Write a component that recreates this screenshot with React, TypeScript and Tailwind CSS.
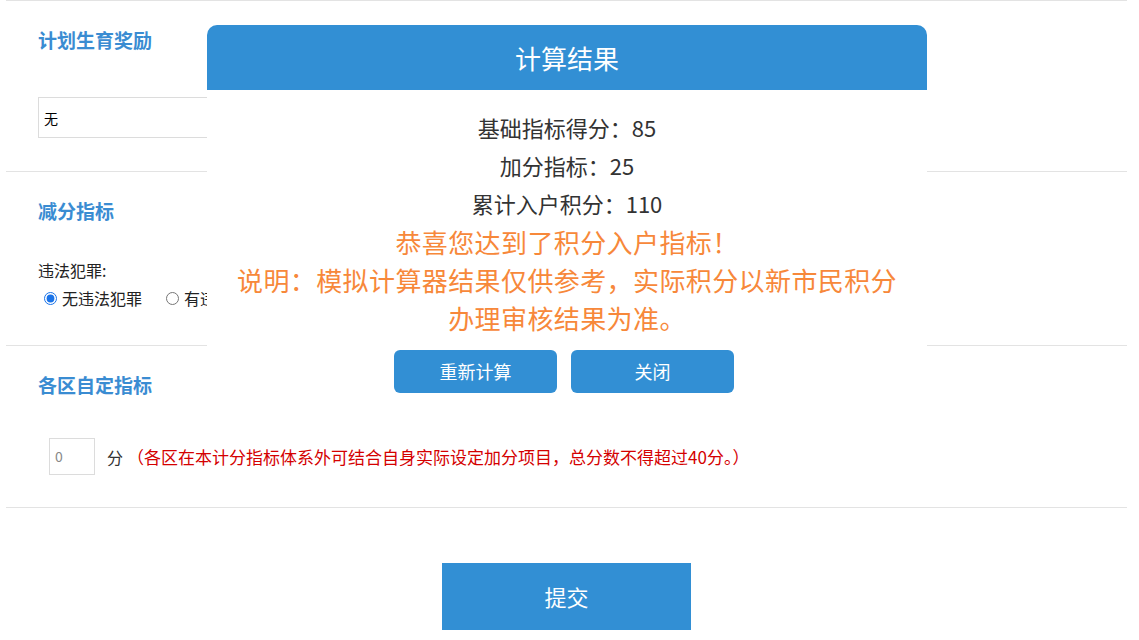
import React from 'react';

const font = { fontFamily: '"Microsoft YaHei", "Noto Sans CJK SC", "Noto Sans", sans-serif' };

const Heading: React.FC<{ children: React.ReactNode }> = ({ children }) => (
  <h3 className="text-[19px] leading-[24px] font-bold text-[#3a8cd2]">{children}</h3>
);

export default function App() {
  return (
    <div className="relative min-h-[640px] bg-white overflow-hidden text-[#333]" style={font}>
      <div className="mx-[6px] w-[1121px]">
        {/* 计划生育奖励 */}
        <section className="border-t border-[#e3e3e3] pt-[27px] pb-[33px] pl-[32px]">
          <Heading>计划生育奖励</Heading>
          <div className="mt-[45px] w-[420px] h-[41px] border border-[#dcdcdc] flex items-center px-[5px] text-[14px] leading-[20px] text-black">
            无
          </div>
        </section>

        {/* 减分指标 */}
        <section className="border-t border-[#e3e3e3] pt-[27px] pb-[37px] pl-[32px]">
          <Heading>减分指标</Heading>
          <div className="mt-[37px] text-[16px] leading-[20px] text-[#222]">违法犯罪:</div>
          <div className="mt-[8px] h-[20px] flex items-center text-[16px] leading-[20px] text-[#222] pl-[6px]">
            <label className="flex items-center">
              <input type="radio" name="fz" defaultChecked className="w-[13px] h-[13px] m-0 mr-[5px] accent-[#1a73e8]" />
              无违法犯罪
            </label>
            <label className="flex items-center ml-[24px]">
              <input type="radio" name="fz" className="w-[13px] h-[13px] m-0 mr-[5px]" />
              有违法犯罪
            </label>
          </div>
        </section>

        {/* 各区自定指标 */}
        <section className="border-t border-[#e3e3e3] pt-[27px] pb-[32px] pl-[32px]">
          <Heading>各区自定指标</Heading>
          <div className="mt-[41px] h-[37px] flex items-center pl-[11px]">
            <div className="w-[46px] h-[37px] border border-[#dcdcdc] flex items-center px-[5px] text-[14px] text-[#888]">0</div>
            <span className="ml-[12px] text-[16px] leading-[20px] text-[#333]">分</span>
            <span className="ml-[4px] text-[17px] leading-[20px] text-[#d40000]">（各区在本计分指标体系外可结合自身实际设定加分项目，总分数不得超过40分。）</span>
          </div>
        </section>

        <div className="border-t border-[#e3e3e3] pt-[55px] flex justify-center">
          <button className="w-[249px] h-[67px] bg-[#328fd4] text-white text-[22px]">提交</button>
        </div>
      </div>

      {/* 计算结果 弹窗 */}
      <div className="absolute left-[207px] top-[25px] w-[720px] bg-white rounded-t-[10px]">
        <div className="h-[65px] bg-[#328fd4] rounded-t-[10px] flex items-center justify-center text-white text-[26px]">
          计算结果
        </div>
        <div className="pt-[18px] pb-[16px] text-center">
          <p className="text-[22px] leading-[38px] text-[#333]">基础指标得分：85</p>
          <p className="text-[22px] leading-[38px] text-[#333]">加分指标：25</p>
          <p className="text-[22px] leading-[38px] text-[#333]">累计入户积分：110</p>
          <p className="text-[26px] leading-[39px] text-[#f7883a] tracking-[0.4px] px-[24px]">恭喜您达到了积分入户指标！</p>
          <p className="text-[26px] leading-[38px] text-[#f7883a] tracking-[0.4px] px-[24px]">
            说明：模拟计算器结果仅供参考，实际积分以新市民积分办理审核结果为准。
          </p>
          <div className="mt-[13px] flex justify-center gap-[14px] pr-[6px]">
            <button className="w-[163px] h-[43px] rounded-[6px] bg-[#328fd4] text-white text-[18px]">重新计算</button>
            <button className="w-[163px] h-[43px] rounded-[6px] bg-[#328fd4] text-white text-[18px]">关闭</button>
          </div>
        </div>
      </div>
    </div>
  );
}
